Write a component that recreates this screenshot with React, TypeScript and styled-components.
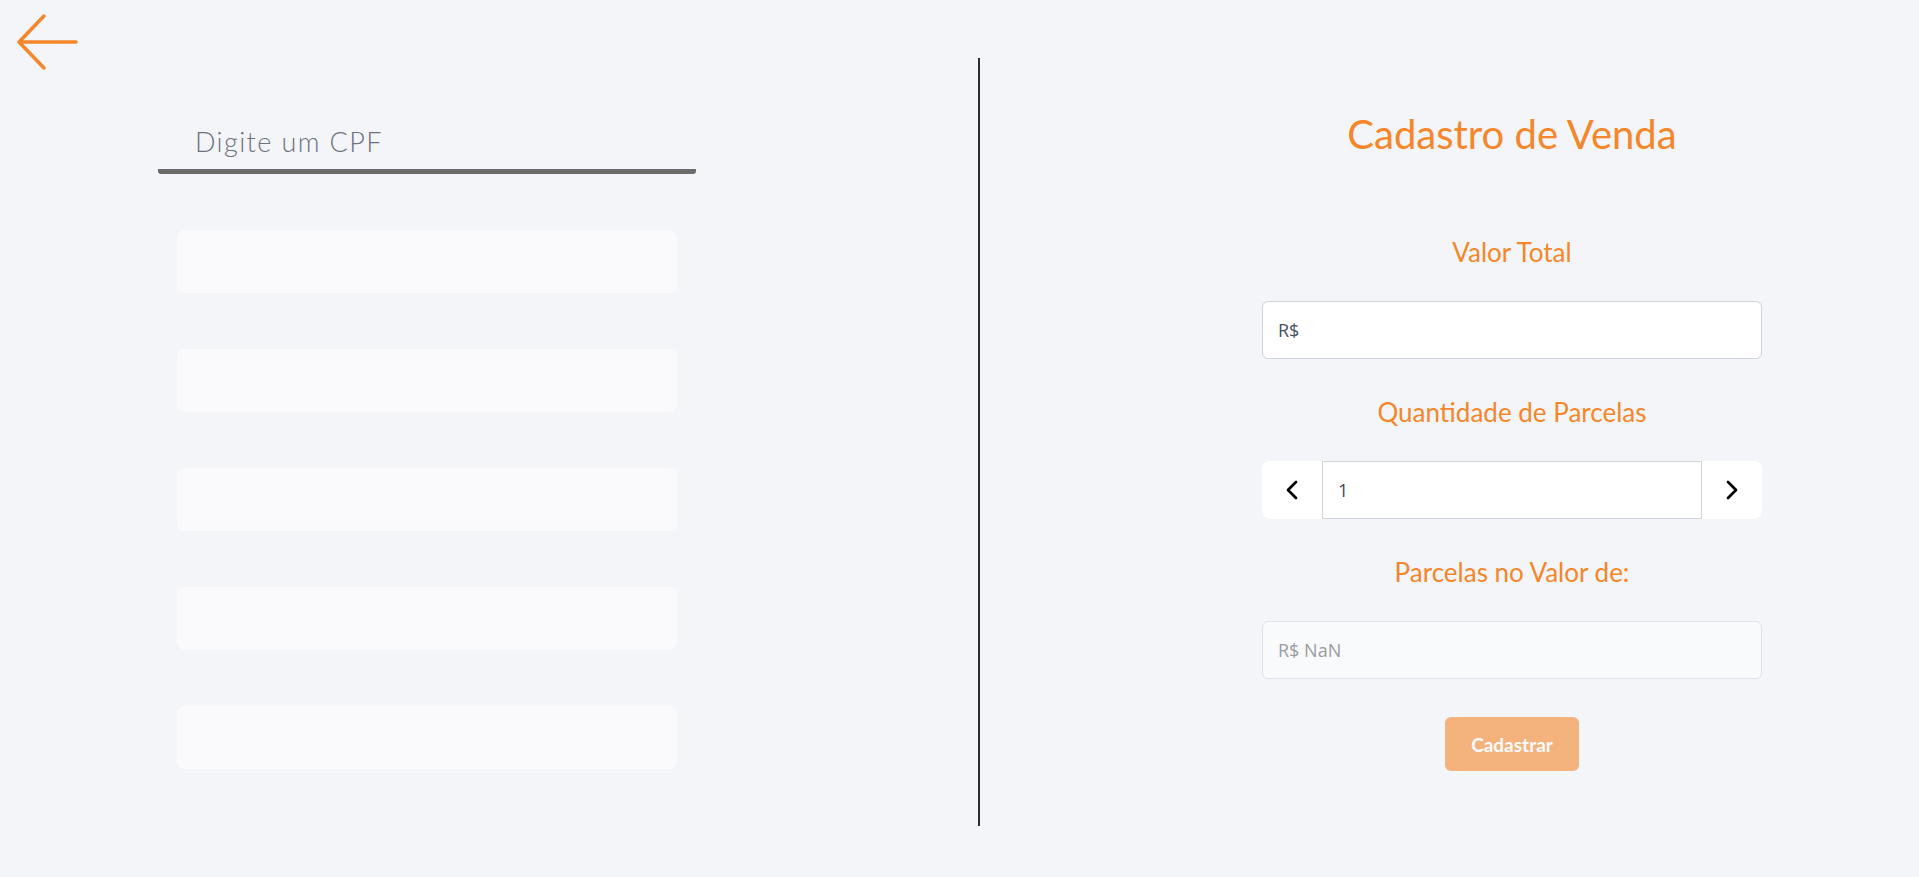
import React from "react";
import styled, { createGlobalStyle } from "styled-components";
import { ChevronLeft, ChevronRight } from "lucide-react";

const ORANGE = "#f5862a";

const GlobalStyle = createGlobalStyle`
  * { box-sizing: border-box; }
  html, body { margin: 0; padding: 0; }
  body {
    background: #f4f5f9;
    font-family: Lato, "Open Sans", sans-serif;
  }
`;

const Page = styled.div`
  position: relative;
  min-height: 877px;
  padding-top: 58px;
`;

const BackButton = styled.button`
  position: absolute;
  top: 0;
  left: 0;
  width: 80px;
  height: 80px;
  padding: 0;
  border: none;
  background: transparent;
  cursor: pointer;
  svg { display: block; }
`;

const Main = styled.main`
  display: flex;
  height: 768px;
`;

const LeftPanel = styled.section`
  width: 854px;
  display: flex;
  flex-direction: column;
  align-items: center;
  padding-top: 55px;
`;

const SearchInput = styled.input`
  width: 538px;
  height: 61px;
  border: none;
  border-bottom: 5px solid #6b6b6b;
  border-radius: 0 0 3px 3px;
  background: transparent;
  padding: 0 0 0 37px;
  font-family: Lato, sans-serif;
  font-weight: 300;
  font-size: 27px;
  letter-spacing: 1.4px;
  color: #4b5563;
  outline: none;
  &::placeholder { color: #6b7280; }
`;

const CardList = styled.div`
  display: flex;
  flex-direction: column;
  gap: 56px;
  margin-top: 56px;
`;

const SkeletonCard = styled.div`
  width: 500px;
  height: 63px;
  border-radius: 8px;
  background: #fafafc;
`;

const Divider = styled.div`
  width: 2px;
  margin-left: 124px;
  background: #2d2d2d;
`;

const RightPanel = styled.section`
  flex: 1;
  padding: 51px 157px 0 282px;
`;

const Form = styled.form`
  display: flex;
  flex-direction: column;
  align-items: stretch;
`;

const Title = styled.h1`
  margin: 0 0 40px;
  font-family: Lato, sans-serif;
  font-weight: 400;
  font-size: 40px;
  line-height: 50px;
  color: ${ORANGE};
  text-align: center;
`;

const Label = styled.label`
  display: block;
  margin: 38px 0 34px;
  font-family: Lato, sans-serif;
  font-size: 26px;
  line-height: 30px;
  color: ${ORANGE};
  text-align: center;
`;

const TextField = styled.input<{ $muted?: boolean }>`
  width: 100%;
  height: 58px;
  padding: 0 15px;
  border-radius: 6px;
  border: 1px solid ${(p) => (p.$muted ? "#dfe2e8" : "#cfd3da")};
  background: ${(p) => (p.$muted ? "#f9fafc" : "#ffffff")};
  font-family: "Open Sans", sans-serif;
  font-size: 18px;
  color: ${(p) => (p.$muted ? "#9a9ca3" : "#465066")};
  outline: none;
`;

const Stepper = styled.div`
  display: flex;
  height: 58px;
  background: #ffffff;
  border-radius: 8px;
  overflow: hidden;
`;

const StepButton = styled.button`
  width: 60px;
  flex: none;
  display: flex;
  align-items: center;
  justify-content: center;
  border: none;
  background: transparent;
  color: #000;
  padding: 0;
  cursor: pointer;
`;

const StepInput = styled.input`
  flex: 1;
  min-width: 0;
  height: 100%;
  border: 1px solid #cfd3da;
  padding: 0 15px;
  font-family: "Open Sans", sans-serif;
  font-size: 18px;
  color: #444a55;
  outline: none;
  background: #fff;
`;

const SubmitButton = styled.button`
  align-self: center;
  margin-top: 38px;
  width: 134px;
  height: 54px;
  border: none;
  border-radius: 6px;
  background: ${ORANGE};
  opacity: 0.6;
  color: #ffffff;
  font-family: Lato, sans-serif;
  font-weight: 700;
  font-size: 19px;
`;

export default function App() {
  return (
    <>
      <GlobalStyle />
      <Page>
        <BackButton aria-label="Voltar">
          <svg width="80" height="80" viewBox="0 0 80 80" fill="none">
            <path
              d="M44 16 L19 42 L44 68 M19 42 H76"
              stroke={ORANGE}
              strokeWidth="3.5"
              strokeLinecap="round"
              strokeLinejoin="round"
            />
          </svg>
        </BackButton>
        <Main>
          <LeftPanel>
            <SearchInput placeholder="Digite um CPF" />
            <CardList>
              {[0, 1, 2, 3, 4].map((i) => (
                <SkeletonCard key={i} />
              ))}
            </CardList>
          </LeftPanel>
          <Divider />
          <RightPanel>
            <Form onSubmit={(e) => e.preventDefault()}>
              <Title>Cadastro de Venda</Title>
              <Label>Valor Total</Label>
              <TextField defaultValue="R$" />
              <Label>Quantidade de Parcelas</Label>
              <Stepper>
                <StepButton type="button" aria-label="Diminuir">
                  <ChevronLeft size={32} strokeWidth={2} />
                </StepButton>
                <StepInput defaultValue="1" />
                <StepButton type="button" aria-label="Aumentar">
                  <ChevronRight size={32} strokeWidth={2} />
                </StepButton>
              </Stepper>
              <Label>Parcelas no Valor de:</Label>
              <TextField $muted readOnly defaultValue="R$ NaN" />
              <SubmitButton type="submit" disabled>
                Cadastrar
              </SubmitButton>
            </Form>
          </RightPanel>
        </Main>
      </Page>
    </>
  );
}
